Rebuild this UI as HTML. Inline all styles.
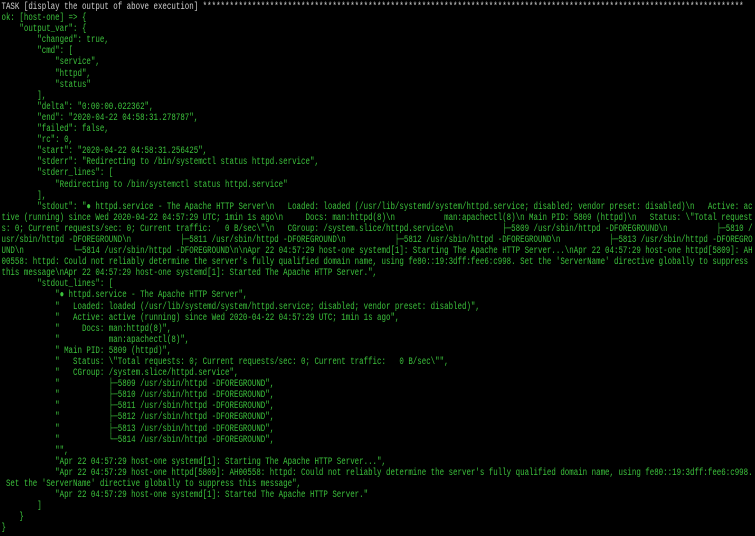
<!DOCTYPE html>
<html><head><meta charset="utf-8"><style>
html,body{margin:0;padding:0;background:#000;width:755px;height:536px;overflow:hidden}
pre{margin:0;padding:2px 0 0 2px;font-family:"Liberation Mono",monospace;font-size:10px;line-height:11.1px;color:#3cc23c;white-space:pre;transform:scaleX(0.745);transform-origin:0 0;width:1010px}
.w{color:#d0d0d0}
</style></head><body><pre><span class="w">TASK [display the output of above execution] *************************************************************************************************************************</span>
ok: [host-one] =&gt; {
    "output_var": {
        "changed": true,
        "cmd": [
            "service",
            "httpd",
            "status"
        ],
        "delta": "0:00:00.022362",
        "end": "2020-04-22 04:58:31.278787",
        "failed": false,
        "rc": 0,
        "start": "2020-04-22 04:58:31.256425",
        "stderr": "Redirecting to /bin/systemctl status httpd.service",
        "stderr_lines": [
            "Redirecting to /bin/systemctl status httpd.service"
        ],
        "stdout": "● httpd.service - The Apache HTTP Server\n   Loaded: loaded (/usr/lib/systemd/system/httpd.service; disabled; vendor preset: disabled)\n   Active: ac
tive (running) since Wed 2020-04-22 04:57:29 UTC; 1min 1s ago\n     Docs: man:httpd(8)\n           man:apachectl(8)\n Main PID: 5809 (httpd)\n   Status: \"Total request
s: 0; Current requests/sec: 0; Current traffic:   0 B/sec\"\n   CGroup: /system.slice/httpd.service\n           ├─5809 /usr/sbin/httpd -DFOREGROUND\n           ├─5810 /
usr/sbin/httpd -DFOREGROUND\n           ├─5811 /usr/sbin/httpd -DFOREGROUND\n           ├─5812 /usr/sbin/httpd -DFOREGROUND\n           ├─5813 /usr/sbin/httpd -DFOREGRO
UND\n           └─5814 /usr/sbin/httpd -DFOREGROUND\n\nApr 22 04:57:29 host-one systemd[1]: Starting The Apache HTTP Server...\nApr 22 04:57:29 host-one httpd[5809]: AH
00558: httpd: Could not reliably determine the server's fully qualified domain name, using fe80::19:3dff:fee6:c998. Set the 'ServerName' directive globally to suppress
this message\nApr 22 04:57:29 host-one systemd[1]: Started The Apache HTTP Server.",
        "stdout_lines": [
            "● httpd.service - The Apache HTTP Server",
            "   Loaded: loaded (/usr/lib/systemd/system/httpd.service; disabled; vendor preset: disabled)",
            "   Active: active (running) since Wed 2020-04-22 04:57:29 UTC; 1min 1s ago",
            "     Docs: man:httpd(8)",
            "           man:apachectl(8)",
            " Main PID: 5809 (httpd)",
            "   Status: \"Total requests: 0; Current requests/sec: 0; Current traffic:   0 B/sec\"",
            "   CGroup: /system.slice/httpd.service",
            "           ├─5809 /usr/sbin/httpd -DFOREGROUND",
            "           ├─5810 /usr/sbin/httpd -DFOREGROUND",
            "           ├─5811 /usr/sbin/httpd -DFOREGROUND",
            "           ├─5812 /usr/sbin/httpd -DFOREGROUND",
            "           ├─5813 /usr/sbin/httpd -DFOREGROUND",
            "           └─5814 /usr/sbin/httpd -DFOREGROUND",
            "",
            "Apr 22 04:57:29 host-one systemd[1]: Starting The Apache HTTP Server...",
            "Apr 22 04:57:29 host-one httpd[5809]: AH00558: httpd: Could not reliably determine the server's fully qualified domain name, using fe80::19:3dff:fee6:c998.
 Set the 'ServerName' directive globally to suppress this message",
            "Apr 22 04:57:29 host-one systemd[1]: Started The Apache HTTP Server."
        ]
    }
}</pre></body></html>
